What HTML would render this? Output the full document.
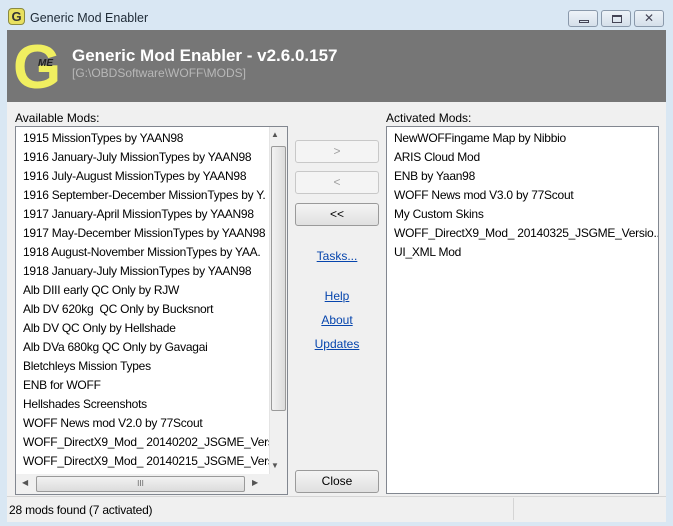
<!DOCTYPE html>
<html><head><style>
*{margin:0;padding:0;box-sizing:border-box}
body{width:673px;height:526px;background:#d9e7f3;font-family:"Liberation Sans",sans-serif;font-size:12px;color:#000;position:relative;overflow:hidden}
.a{position:absolute}
.title{left:30px;top:11px;font-size:12.5px;color:#1e2a36}
.banner{left:7px;top:30px;width:659px;height:72px;background:#767676}
.client{left:7px;top:102px;width:659px;height:394px;background:#f0f0f0}
.list{background:#fff;border:1px solid #828790;overflow:hidden}
.item{position:absolute;left:7px;white-space:nowrap;font-size:12px;letter-spacing:-0.25px}
.btn{position:absolute;left:295px;width:84px;height:23px;border:1px solid #9a9a9a;border-radius:3px;background:linear-gradient(#f4f4f4,#e0e0e0);text-align:center;line-height:21px;font-size:12px}
.dis{border-color:#c8c8c8;color:#a0a0a0;background:#f4f4f4}
.link{position:absolute;width:84px;left:295px;text-align:center;color:#0645ad;text-decoration:underline;font-size:12px}
.wb{position:absolute;top:10px;height:17px;border:1px solid #8a99ab;border-radius:3px;background:linear-gradient(#eef3f8,#d5dfea)}
</style></head><body>
<div class="a" style="left:8px;top:8px;width:17px;height:17px;border-radius:4px;background:#e8e060;border:1px solid #8a8a40;font-weight:bold;font-size:13px;line-height:15px;text-align:center;color:#333">G</div>
<div class="a title">Generic Mod Enabler</div>
<div class="wb" style="left:568px;width:30px"><div class="a" style="left:10px;top:9px;width:10px;height:3px;border:1px solid #445"></div></div>
<div class="wb" style="left:601px;width:30px"><div class="a" style="left:10px;top:4px;width:10px;height:8px;border:1px solid #445;border-top-width:2px"></div></div>
<div class="wb" style="left:634px;width:30px;text-align:center;line-height:15px;color:#445;font-size:12px">✕</div>
<div class="a banner"></div>
<div class="a" style="left:13px;top:42px;font-family:'Liberation Sans';font-weight:900;font-size:62px;line-height:52px;color:#f0ef60">G</div>
<div class="a" style="left:38px;top:58px;font-style:italic;font-weight:bold;font-size:10px;color:#222">ME</div>
<div class="a" style="left:72px;top:46px;font-weight:bold;font-size:17px;color:#fff">Generic Mod Enabler - v2.6.0.157</div>
<div class="a" style="left:72px;top:66px;font-size:12px;color:#b8b8b8">[G:\OBDSoftware\WOFF\MODS]</div>
<div class="a client"></div>
<div class="a" style="left:15px;top:111px">Available Mods:</div>
<div class="a" style="left:386px;top:111px">Activated Mods:</div>
<div class="a list" style="left:15px;top:126px;width:273px;height:369px">
<div class="item" style="top:4px">1915 MissionTypes by YAAN98</div>
<div class="item" style="top:23px">1916 January-July MissionTypes by YAAN98</div>
<div class="item" style="top:42px">1916 July-August MissionTypes by YAAN98</div>
<div class="item" style="top:61px">1916 September-December MissionTypes by Y.</div>
<div class="item" style="top:80px">1917 January-April MissionTypes by YAAN98</div>
<div class="item" style="top:99px">1917 May-December MissionTypes by YAAN98</div>
<div class="item" style="top:118px">1918 August-November MissionTypes by YAA.</div>
<div class="item" style="top:137px">1918 January-July MissionTypes by YAAN98</div>
<div class="item" style="top:156px">Alb DIII early QC Only by RJW</div>
<div class="item" style="top:175px">Alb DV 620kg&nbsp; QC Only by Bucksnort</div>
<div class="item" style="top:194px">Alb DV QC Only by Hellshade</div>
<div class="item" style="top:213px">Alb DVa 680kg QC Only by Gavagai</div>
<div class="item" style="top:232px">Bletchleys Mission Types</div>
<div class="item" style="top:251px">ENB for WOFF</div>
<div class="item" style="top:270px">Hellshades Screenshots</div>
<div class="item" style="top:289px">WOFF News mod V2.0 by 77Scout</div>
<div class="item" style="top:308px">WOFF_DirectX9_Mod_ 20140202_JSGME_Versio.</div>
<div class="item" style="top:327px">WOFF_DirectX9_Mod_ 20140215_JSGME_Versio.</div>
<div class="a" style="left:253px;top:0;width:18px;height:347px;background:#f0f0f0;border-left:1px solid #e4e4e4"></div>
<div class="a" style="left:255px;top:3px;font-size:8px;color:#555">▲</div>
<div class="a" style="left:255px;top:334px;font-size:8px;color:#555">▼</div>
<div class="a" style="left:255px;top:19px;width:15px;height:265px;border:1px solid #9a9a9a;border-radius:2px;background:linear-gradient(90deg,#f2f2f2,#dcdcdc)"></div>
<div class="a" style="left:0;top:347px;width:271px;height:20px;background:#f0f0f0"></div>
<div class="a" style="left:6px;top:351px;font-size:8px;color:#555">◀</div>
<div class="a" style="left:236px;top:351px;font-size:8px;color:#555">▶</div>
<div class="a" style="left:20px;top:349px;width:209px;height:16px;border:1px solid #9a9a9a;border-radius:2px;background:linear-gradient(#f2f2f2,#dcdcdc);text-align:center;font-size:8px;line-height:14px;color:#666">III</div>
</div>
<div class="a list" style="left:386px;top:126px;width:273px;height:368px">
<div class="item" style="top:4px">NewWOFFingame Map by Nibbio</div>
<div class="item" style="top:23px">ARIS Cloud Mod</div>
<div class="item" style="top:42px">ENB by Yaan98</div>
<div class="item" style="top:61px">WOFF News mod V3.0 by 77Scout</div>
<div class="item" style="top:80px">My Custom Skins</div>
<div class="item" style="top:99px">WOFF_DirectX9_Mod_ 20140325_JSGME_Versio...</div>
<div class="item" style="top:118px">UI_XML Mod</div>
</div>
<div class="btn dis" style="top:140px">&gt;</div>
<div class="btn dis" style="top:171px">&lt;</div>
<div class="btn" style="top:203px">&lt;&lt;</div>
<div class="link" style="top:249px">Tasks...</div>
<div class="link" style="top:289px">Help</div>
<div class="link" style="top:313px">About</div>
<div class="link" style="top:337px">Updates</div>
<div class="btn" style="top:470px">Close</div>
<div class="a" style="left:7px;top:496px;width:659px;height:26px;background:#f0f0f0;border-top:1px solid #d5d5d5"></div>
<div class="a" style="left:513px;top:498px;width:1px;height:22px;background:#d5d5d5"></div>
<div class="a" style="left:9px;top:503px;letter-spacing:-0.2px">28 mods found (7 activated)</div>
</body></html>
